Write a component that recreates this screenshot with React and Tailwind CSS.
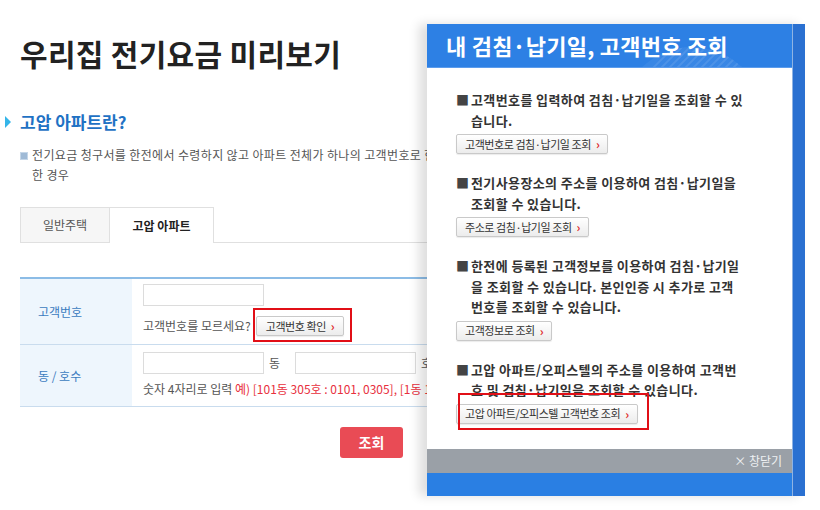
import React from "react";

const font = { fontFamily: '"Noto Sans CJK KR", "Noto Sans", sans-serif' };

function PopButton({ label }) {
  return (
    <button className="h-[20px] px-[8px] flex items-center gap-[5px] rounded-[2px] border border-[#c9c9c9] bg-gradient-to-b from-white to-[#ececec] text-[11px] tracking-[-0.04em] text-[#333] shadow-[0_1px_1px_rgba(0,0,0,0.08)] whitespace-nowrap">
      {label}
      <span className="text-[#e02a2a] font-bold text-[12px] leading-none">›</span>
    </button>
  );
}

function Section({ lines, button }) {
  return (
    <div className="mb-[19px]">
      <div className="flex text-[13px] leading-[20.5px] font-bold text-[#333] tracking-[0.03em]">
        <span className="w-[15px] shrink-0 text-[#444]">■</span>
        <div className="whitespace-nowrap">
          {lines.map((l, i) => (
            <div key={i}>{l}</div>
          ))}
        </div>
      </div>
      <div className="mt-[3px]">
        <PopButton label={button} />
      </div>
    </div>
  );
}

export default function App() {
  return (
    <div className="relative w-[820px] h-[510px] overflow-hidden bg-white" style={font}>
      {/* main page */}
      <div className="pl-[20px]">
        <h1 className="mt-[33px] h-[40px] leading-[40px] text-[30px] font-bold text-[#222] tracking-[0.01em]">
          우리집 전기요금 미리보기
        </h1>

        <div className="mt-[39px] flex items-center h-[20px] -ml-[15px]">
          <span className="w-0 h-0 border-y-[6px] border-y-transparent border-l-[6px] border-l-[#35b5e9] mr-[9px]"></span>
          <h2 className="text-[17px] font-bold text-[#1f72c4]">고압 아파트란?</h2>
        </div>

        <div className="mt-[13px] flex text-[12px] leading-[20px] text-[#555] whitespace-nowrap tracking-[0.03em]">
          <span className="mt-[7px] w-[8px] h-[8px] mr-[4px] shrink-0 bg-[#9fbad6] border border-[#c4d6e8]"></span>
          <p>
            전기요금 청구서를 한전에서 수령하지 않고 아파트 전체가 하나의 고객번호로 한전과 계약을
            <br />한 경우
          </p>
        </div>

        {/* tabs */}
        <div className="mt-[22px] flex h-[36px] w-[780px]">
          <div className="w-[90px] flex items-center justify-center border border-[#e0e0e0] bg-[#f6f6f6] text-[12px] text-[#555]">
            일반주택
          </div>
          <div className="w-[104px] flex items-center justify-center border border-b-0 border-l-0 border-[#e0e0e0] bg-white text-[12px] font-bold text-[#222]">
            고압 아파트
          </div>
          <div className="flex-1 border-b border-[#e0e0e0]"></div>
        </div>

        {/* table */}
        <div className="mt-[34px] w-[760px] border-t-2 border-[#8cbce6] text-[12px]">
          <div className="flex h-[66px] border-b border-[#c9dcee]">
            <div className="w-[112px] bg-[#eef6fd] pl-[18px] flex items-center text-[#3b7bbf]">고객번호</div>
            <div className="flex-1 pl-[11px] pt-[5px]">
              <div className="w-[121px] h-[22px] border border-[#dcdcdc]"></div>
              <div className="mt-[10px] flex items-center text-[#555]">
                <span>고객번호를 모르세요?</span>
                <button className="ml-[5px] h-[20px] px-[9px] flex items-center gap-[5px] rounded-[2px] border border-[#c9c9c9] bg-gradient-to-b from-white to-[#ececec] text-[11px] tracking-[-0.04em] text-[#333] shadow-[0_1px_1px_rgba(0,0,0,0.08)]">
                  고객번호 확인
                  <span className="text-[#e02a2a] font-bold text-[12px] leading-none">›</span>
                </button>
              </div>
            </div>
          </div>
          <div className="flex h-[62px] border-b border-[#c9dcee]">
            <div className="w-[112px] bg-[#eef6fd] pl-[18px] flex items-center text-[#3b7bbf]">동 / 호수</div>
            <div className="flex-1 pl-[11px] pt-[7px]">
              <div className="flex items-center">
                <div className="w-[121px] h-[22px] border border-[#dcdcdc]"></div>
                <span className="ml-[5px] w-[26px] text-[#555]">동</span>
                <div className="w-[121px] h-[22px] border border-[#dcdcdc]"></div>
                <span className="ml-[5px] text-[#555]">호</span>
              </div>
              <div className="mt-[6px] whitespace-nowrap text-[#555]">
                숫자 4자리로 입력{" "}
                <span className="text-[#e8303d]">예) [101동 305호 : 0101, 0305], [1동 1001호 : 0001, 1001]</span>
              </div>
            </div>
          </div>
        </div>

        <button className="mt-[20px] ml-[320px] w-[63px] h-[31px] rounded-[3px] bg-[#e94b55] text-white text-[14px] font-bold">
          조회
        </button>
      </div>

      {/* red highlight on left */}
      <div className="absolute left-[253px] top-[308px] w-[99px] h-[34px] border-2 border-[#e10f17]"></div>

      {/* popup */}
      <div className="absolute left-[427px] top-[24px] h-[472px] flex shadow-[-8px_0_10px_rgba(0,0,0,0.13)]">
        <div className="w-[365px] flex flex-col bg-white">
          <div className="relative h-[44px] bg-[#2d80e4] border-b border-[#5c9cec] overflow-hidden flex items-center pl-[19px]">
            <svg className="absolute left-[190px] top-[20px]" width="150" height="150" viewBox="0 0 150 150">
              <defs>
                <clipPath id="c">
                  <circle cx="75" cy="75" r="72" />
                </clipPath>
              </defs>
              <circle cx="75" cy="75" r="72" fill="rgba(255,255,255,0.06)" />
              <g clipPath="url(#c)" stroke="rgba(255,255,255,0.1)" strokeWidth="2">
                {Array.from({ length: 14 }).map((_, i) => (
                  <line key={i} x1={60 + i * 8} y1="0" x2={i * 8} y2="60" />
                ))}
              </g>
            </svg>
            <span className="relative text-[22px] font-bold text-white tracking-[0.01em]">
              내 검침·납기일, 고객번호 조회
            </span>
          </div>

          <div className="flex-1 pl-[29px] pt-[22px]">
            <Section
              lines={["고객번호를 입력하여 검침·납기일을 조회할 수 있", "습니다."]}
              button="고객번호로 검침·납기일 조회"
            />
            <Section
              lines={["전기사용장소의 주소를 이용하여 검침·납기일을", "조회할 수 있습니다."]}
              button="주소로 검침·납기일 조회"
            />
            <Section
              lines={[
                "한전에 등록된 고객정보를 이용하여 검침·납기일",
                "을 조회할 수 있습니다. 본인인증 시 추가로 고객",
                "번호를 조회할 수 있습니다.",
              ]}
              button="고객정보로 조회"
            />
            <Section
              lines={["고압 아파트/오피스텔의 주소를 이용하여 고객번", "호 및 검침·납기일을 조회할 수 있습니다."]}
              button="고압 아파트/오피스텔 고객번호 조회"
            />
          </div>

          <div className="h-[24px] bg-[#9aa0a7] flex items-center justify-end pr-[10px] text-[12px] text-[#eef0f2]">
            × 창닫기
          </div>
          <div className="h-[23px] bg-[#2a7fe3]"></div>
        </div>
        <div className="w-[13px] bg-[#2a70d1] border-l border-[#8fb3e3]"></div>
      </div>

      {/* red highlight in popup */}
      <div className="absolute left-[458px] top-[393px] w-[191px] h-[37px] border-2 border-[#e10f17]"></div>
    </div>
  );
}
